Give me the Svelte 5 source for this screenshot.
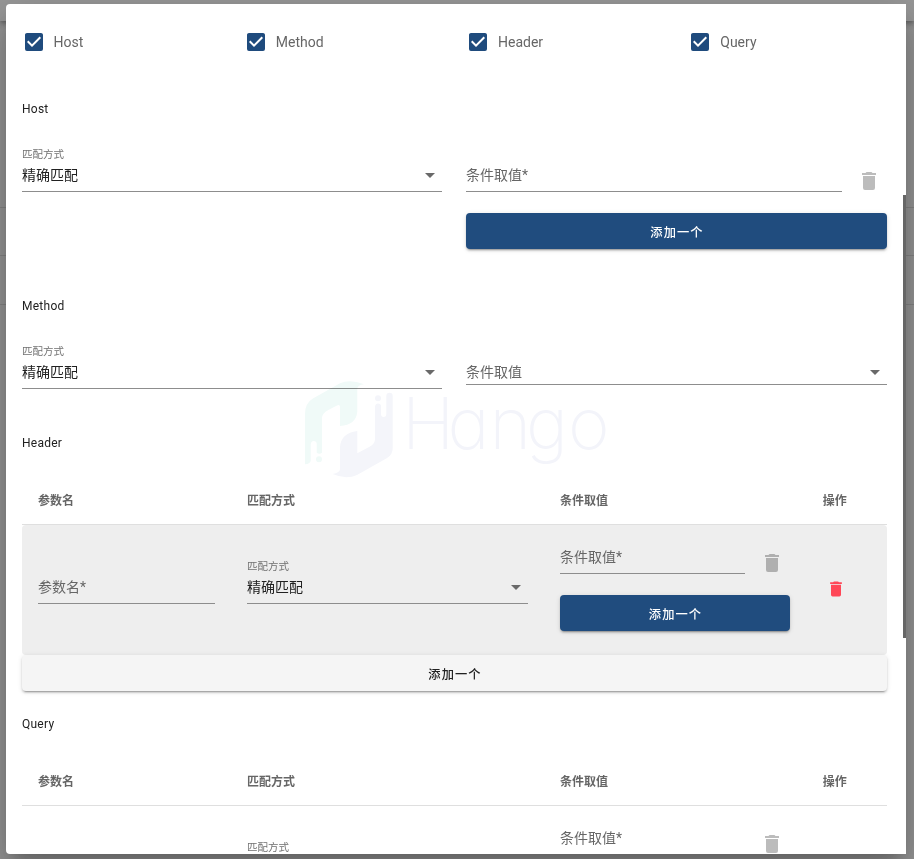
<script>
  const checks = ['Host', 'Method', 'Header', 'Query'];
  const tables = ['Header', 'Query'];
  const lines = [207, 255, 304];
</script>

{#snippet trash(cls)}
  <svg class={cls} viewBox="0 0 24 24"><path fill="currentColor" d="M19,4H15.5L14.5,3H9.5L8.5,4H5V6H19M6,19A2,2 0 0,0 8,21H16A2,2 0 0,0 18,19V7H6V19Z" /></svg>
{/snippet}

{#snippet arrow()}
  <svg class="arrow" viewBox="0 0 24 24"><path fill="currentColor" d="M7,10L12,15L17,10H7Z" /></svg>
{/snippet}

{#snippet matchMode()}
  <div class="field">
    <span class="small-label">匹配方式</span>
    <div class="line"><span class="value">精确匹配</span>{@render arrow()}</div>
  </div>
{/snippet}

{#snippet valueList()}
  <div class="value-list">
    <div class="value-row">
      <div class="field"><div class="line">条件取值*</div></div>
      {@render trash('trash')}
    </div>
    <button class="btn primary">添加一个</button>
  </div>
{/snippet}

<div class="page">
  <div class="appbar"></div>
  {#each lines as y}
    <div class="rule" style="top: {y}px"></div>
  {/each}

  <div class="dialog">
    <div class="content">
      <div class="checks">
        {#each checks as name}
          <label class="check">
            <svg viewBox="0 0 24 24"><path fill="currentColor" d="M10,17L5,12L6.41,10.58L10,14.17L17.59,6.58L19,8M19,3H5C3.89,3 3,3.89 3,5V19A2,2 0 0,0 5,21H19A2,2 0 0,0 21,19V5C21,3.89 20.1,3 19,3Z" /></svg>
            <span>{name}</span>
          </label>
        {/each}
      </div>

      <h4 class="first">Host</h4>
      <div class="form host">
        {@render matchMode()}
        {@render valueList()}
      </div>

      <h4>Method</h4>
      <div class="form method">
        {@render matchMode()}
        <div class="field short"><div class="line"><span>条件取值</span>{@render arrow()}</div></div>
      </div>

      {#each tables as name, i}
        <h4>{name}</h4>
        <div class="grid thead">
          <span>参数名</span><span>匹配方式</span><span>条件取值</span><span>操作</span>
        </div>
        <div class="grid trow" class:hovered={i === 0}>
          <div class="cell mid"><div class="field"><div class="line">参数名*</div></div></div>
          <div class="cell mid">{@render matchMode()}</div>
          <div class="cell">{@render valueList()}</div>
          <div class="cell action">{@render trash('remove')}</div>
        </div>
        <button class="btn plain">添加一个</button>
      {/each}
    </div>

    <svg class="watermark" viewBox="0 0 310 110" width="310" height="110">
      <g fill="#f0faf8">
        <path d="M5 86.300V36Q5 25 13.300 20.300L40 5.300Q50 1 64 6.300Q57.300 7 57.300 11V33.700Q56 47 40 48V29Q40 26 37 27.500L28.300 32Q22 35.500 22 40V74.700Q19.300 77 16.700 74.700V65.500Q16.500 63 13.700 63Q11 63 10.700 66.500V83Q10 86 5 86.300Z" />
        <circle cx="19" cy="81.300" r="3" />
      </g>
      <g fill="#f4f5fa">
        <path d="M92.700 70.300Q92.700 77 86.700 80.300L57 97Q46 102 32.700 96Q40 94.500 40 91V69Q41 55 57.300 53V75.300L70 68.500Q75 66 75 61V28.500Q75.500 25.500 78 25.500Q81 25.500 81 28.500V36Q81 39 83.700 39Q86.300 39 86.300 36V18Q86.500 14.700 89.500 14.700Q92.700 14.700 92.700 18Z" />
        <circle cx="78" cy="20.300" r="3" />
      </g>
      <text x="102 147.500 189.500 226 268" y="70.700" fill="#f3f4fa">Hango</text>
    </svg>
    <div class="scrollbar"></div>
  </div>
</div>

<style>
  :global(body) { margin: 0; }
  .page {
    position: relative;
    width: 914px;
    height: 859px;
    overflow: hidden;
    background: #979797;
    font-family: Roboto, "Noto Sans CJK SC", sans-serif;
    font-size: 14px;
    color: #666;
  }
  .page * { box-sizing: border-box; }
  .appbar {
    position: absolute;
    inset: 0 0 auto;
    height: 21px;
    background: #999;
    box-shadow: 0 2px 4px -1px rgba(0,0,0,.2), 0 4px 5px rgba(0,0,0,.14), 0 1px 10px rgba(0,0,0,.12);
  }
  .rule { position: absolute; left: 0; right: 0; height: 1px; background: #858585; }
  .dialog {
    position: absolute;
    left: 6px;
    top: 4px;
    width: 900px;
    height: 850px;
    overflow: hidden;
    background: #fff;
    border-radius: 4px 0 0 4px;
    box-shadow: 0 11px 15px -7px rgba(0,0,0,.2), 0 24px 38px 3px rgba(0,0,0,.14), 0 9px 46px 8px rgba(0,0,0,.12);
  }
  .content { display: flex; flex-direction: column; padding: 26px 19px 0 16px; }
  .checks { display: grid; grid-template-columns: repeat(4, 222.25px); height: 24px; }
  .check { display: flex; align-items: center; line-height: 24px; }
  .check svg { width: 24px; height: 24px; margin: 0 8px 0 -.5px; color: #1f4b7d; }
  h4 {
    margin: 47px 0 24px;
    font-size: 12px;
    font-weight: 400;
    line-height: 20px;
    letter-spacing: .25px;
    color: #212121;
  }
  h4.first { margin-top: 45px; }
  .form { display: grid; grid-template-columns: 420px 421px; gap: 24px; align-items: start; }
  .host { height: 106px; }
  .method { height: 46px; }
  .field {
    display: flex;
    flex-direction: column;
    justify-content: flex-end;
    flex: 1;
    height: 49px;
    padding-bottom: 4px;
    border-bottom: 1px solid #8d8d8d;
  }
  .field.short { height: 45px; padding-bottom: 0; }
  .field.short .line { height: 24px; }
  .small-label { font-size: 10.5px; line-height: 16px; height: 15px; color: #717171; }
  .line { display: flex; align-items: center; justify-content: space-between; height: 25px; line-height: 24px; }
  .value { color: #212121; }
  .arrow { width: 24px; height: 24px; color: #696969; }
  .value-list { display: flex; flex-direction: column; }
  .value-row { display: flex; height: 70px; }
  .trash { width: 24px; height: 24px; margin: 26px 6px 0 15px; opacity: .26; color: #000; }
  .btn {
    height: 36px;
    flex: none;
    padding: 1px 0 0 1px;
    border: 0;
    border-radius: 4px;
    font-family: inherit;
    font-size: 12.25px;
    font-weight: 500;
    letter-spacing: 1.09px;
    box-shadow: 0 3px 1px -2px rgba(0,0,0,.2), 0 2px 2px rgba(0,0,0,.14), 0 1px 5px rgba(0,0,0,.12);
  }
  .primary { background: #204c7e; color: #fff; }
  .plain { background: #f5f5f5; color: #212121; margin-bottom: -24px; }
  .grid { display: grid; grid-template-columns: 209px 313px 262px 81px; }
  .thead { height: 48px; border-bottom: 1px solid #dfdfdf; }
  .thead span { padding-left: 16px; font-size: 12px; font-weight: 700; line-height: 49px; color: #666; }
  .thead span:last-child { padding-left: 16.700px; }
  .trow { height: 130px; }
  .hovered { background: #eee; border-radius: 4px; }
  .cell { padding: 0 16px; }
  .mid { padding-top: 30px; }
  .action { padding: 54px 0 0 20px; color: #ff4757; }
  .remove { display: block; width: 20px; height: 20px; }
  .watermark { position: absolute; left: 294px; top: 374px; mix-blend-mode: multiply; pointer-events: none; }
  .watermark text { font: 200 71px Inter, sans-serif; font-feature-settings: "cv11"; }
  .scrollbar { position: absolute; right: 0; top: 191px; width: 3px; height: 443px; background: #666; }
</style>
